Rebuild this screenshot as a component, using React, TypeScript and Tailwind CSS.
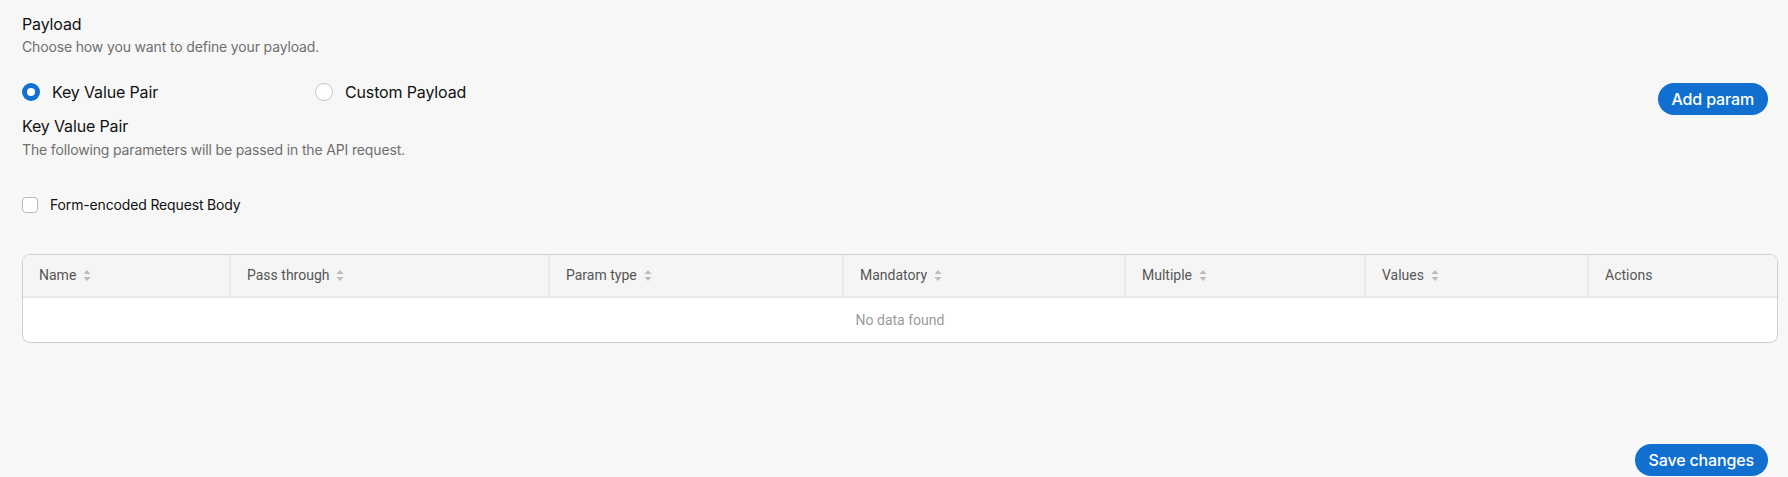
import React from "react";

const SortIcon = () => (
  <svg width="8" height="13" viewBox="0 0 8 13" className="ml-[7px] shrink-0">
    <path d="M4 1 L7.5 5 H0.5 Z" fill="#bcbcbc" />
    <path d="M4 12 L7.5 8 H0.5 Z" fill="#bcbcbc" />
  </svg>
);

const cols: { label: string; w: string; sort: boolean }[] = [
  { label: "Name", w: "w-[208px]", sort: true },
  { label: "Pass through", w: "w-[319px]", sort: true },
  { label: "Param type", w: "w-[294px]", sort: true },
  { label: "Mandatory", w: "w-[282px]", sort: true },
  { label: "Multiple", w: "w-[240px]", sort: true },
  { label: "Values", w: "w-[223px]", sort: true },
  { label: "Actions", w: "flex-1", sort: false },
];

export default function App() {
  return (
    <div className="w-[1788px] h-[477px] bg-[#f7f7f7] overflow-hidden font-['Inter',sans-serif] text-[#121212] tracking-[-0.15px]">
      <div className="pl-[22px] pr-[10px] pt-[12px] flex flex-col h-full">
        <div className="text-[16px] leading-[24px]">Payload</div>
        <div className="text-[14px] leading-[20px] text-[#6f6f6f] mt-[1px]">
          Choose how you want to define your payload.
        </div>

        <div className="flex items-start mt-[23px]">
          <div className="flex-1">
            <div className="flex items-center h-[24px]">
              <div className="flex items-center w-[293px]">
                <span className="w-[18px] h-[18px] rounded-full bg-[#1170cf] flex items-center justify-center shrink-0">
                  <span className="w-[8px] h-[8px] rounded-full bg-white" />
                </span>
                <span className="ml-[12px] text-[16px] leading-[24px]">Key Value Pair</span>
              </div>
              <div className="flex items-center">
                <span className="w-[18px] h-[18px] rounded-full bg-white border border-[#c9c9c9] shrink-0" />
                <span className="ml-[12px] text-[16px] leading-[24px]">Custom Payload</span>
              </div>
            </div>
            <div className="text-[16px] leading-[24px] mt-[10px]">Key Value Pair</div>
            <div className="text-[14px] leading-[20px] text-[#6f6f6f] mt-[2px]">
              The following parameters will be passed in the API request.
            </div>
          </div>
          <button className="mt-[3px] mr-[10px] h-[32px] px-[14px] rounded-full bg-[#1170cf] text-white text-[16px] font-medium leading-[32px]">
            Add param
          </button>
        </div>

        <div className="flex items-center mt-[35px] h-[20px]">
          <span className="w-[16px] h-[16px] rounded-[4px] bg-white border border-[#b9b9b9] shrink-0" />
          <span className="ml-[12px] text-[14px] leading-[20px]">Form-encoded Request Body</span>
        </div>

        <div className="mt-[39px] border border-[#cfcfcf] rounded-[8px] overflow-hidden bg-white font-['Roboto',sans-serif] tracking-normal">
          <div className="flex h-[43px] bg-[#f5f5f5] border-b-2 border-[#e8e8e8]">
            {cols.map((c, i) => (
              <div
                key={c.label}
                className={`${c.w} flex items-center pl-[16px] text-[14px] text-[#555555] ${
                  i < cols.length - 1 ? "border-r-2 border-[#e8e8e8]" : ""
                }`}
              >
                <span>{c.label}</span>
                {c.sort && <SortIcon />}
              </div>
            ))}
          </div>
          <div className="h-[44px] flex items-center justify-center text-[14px] text-[#9a9a9a]">
            No data found
          </div>
        </div>

        <div className="flex-1" />
        <div className="flex justify-end mb-[1px]">
          <button className="mr-[10px] h-[32px] px-[14px] rounded-full bg-[#1170cf] text-white text-[16px] font-medium leading-[32px]">
            Save changes
          </button>
        </div>
      </div>
    </div>
  );
}
